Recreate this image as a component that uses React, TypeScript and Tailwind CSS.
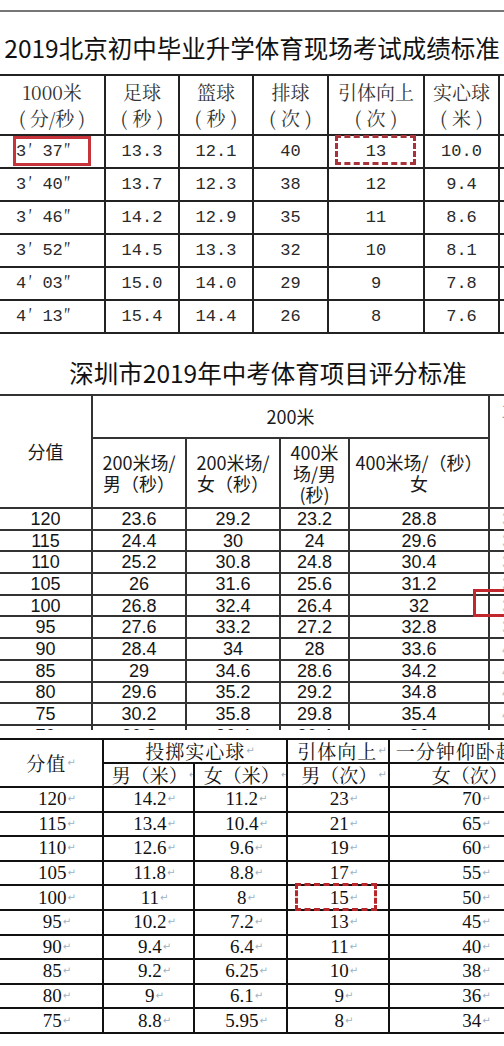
import React from "react";

const cjk = "font-['Noto_Serif_CJK_SC','Noto_Sans_CJK_SC',serif]";
const cjkSans = "font-['Noto_Sans_CJK_SC',sans-serif]";

const t1 = [
  [["3", "37"], "13.3", "12.1", "40", "13", "10.0"],
  [["3", "40"], "13.7", "12.3", "38", "12", "9.4"],
  [["3", "46"], "14.2", "12.9", "35", "11", "8.6"],
  [["3", "52"], "14.5", "13.3", "32", "10", "8.1"],
  [["4", "03"], "15.0", "14.0", "29", "9", "7.8"],
  [["4", "13"], "15.4", "14.4", "26", "8", "7.6"],
] as const;

const t2 = [
  ["120", "23.6", "29.2", "23.2", "28.8", "3"],
  ["115", "24.4", "30", "24", "29.6", "3"],
  ["110", "25.2", "30.8", "24.8", "30.4", "3"],
  ["105", "26", "31.6", "25.6", "31.2", "3"],
  ["100", "26.8", "32.4", "26.4", "32", "3"],
  ["95", "27.6", "33.2", "27.2", "32.8", "3"],
  ["90", "28.4", "34", "28", "33.6", "4"],
  ["85", "29", "34.6", "28.6", "34.2", "4"],
  ["80", "29.6", "35.2", "29.2", "34.8", "4"],
  ["75", "30.2", "35.8", "29.8", "35.4", "4"],
  ["70", "30.8", "36.4", "30.4", "36", "4"],
];

const t3 = [
  ["120", "14.2", "11.2", "23", "70"],
  ["115", "13.4", "10.4", "21", "65"],
  ["110", "12.6", "9.6", "19", "60"],
  ["105", "11.8", "8.8", "17", "55"],
  ["100", "11", "8", "15", "50"],
  ["95", "10.2", "7.2", "13", "45"],
  ["90", "9.4", "6.4", "11", "40"],
  ["85", "9.2", "6.25", "10", "38"],
  ["80", "9", "6.1", "9", "36"],
  ["75", "8.8", "5.95", "8", "34"],
];

function Ret() {
  return (
    <span className="font-['DejaVu_Sans',sans-serif] text-[10px] leading-[10px] text-[#9db3c3] ml-[1px]">
      ↵
    </span>
  );
}

function Paren({ c }: { c: string }) {
  return (
    <span>
      (<span className="mx-[5px]">{c}</span>)
    </span>
  );
}

function H1({ a, b }: { a: React.ReactNode; b: React.ReactNode }) {
  return (
    <div className={`bg-white flex flex-col items-center justify-center text-[19px] leading-[26px] text-[#333] ${cjk}`}>
      <div>{a}</div>
      <div>{b}</div>
    </div>
  );
}

function Time({ m, s }: { m: string; s: string }) {
  return (
    <span className="whitespace-nowrap">
      {m}
      <span className={`${cjk} text-[16px] ml-[2px] mr-[10px]`}>′</span>
      {s}
      <span className={`${cjk} text-[16px] ml-[1px]`}>″</span>
    </span>
  );
}

function Table1() {
  return (
    <div className="grid grid-cols-[104px_72px_72px_73px_94px_73px_100px] grid-rows-[58px_repeat(6,31px)] gap-[2px] bg-[#222] py-[2px] w-max">
      <H1 a="1000米" b={<span>(<span className="mx-[4px]">分/秒</span>)</span>} />
      <H1 a="足球" b={<Paren c="秒" />} />
      <H1 a="篮球" b={<Paren c="秒" />} />
      <H1 a="排球" b={<Paren c="次" />} />
      <H1 a="引体向上" b={<Paren c="次" />} />
      <H1 a="实心球" b={<Paren c="米" />} />
      <div className="bg-white" />
      {t1.map((r, i) => (
        <React.Fragment key={i}>
          {r.map((v, j) => (
            <div
              key={j}
              className={`bg-white flex items-center ${j === 0 ? "justify-start pl-[16px]" : "justify-center"} font-['Liberation_Mono','DejaVu_Sans_Mono',monospace] text-[17px] text-[#2a2a2a]`}
            >
              {typeof v === "string" ? v : <Time m={v[0]} s={v[1]} />}
            </div>
          ))}
          <div className="bg-white" />
        </React.Fragment>
      ))}
    </div>
  );
}

function Table2() {
  const hc = `bg-white flex flex-col items-center justify-center text-center text-[18px] leading-[21px] text-[#1a1a1a] ${cjkSans}`;
  return (
    <div className="grid grid-cols-[91px_92px_92px_67px_138px_40px] grid-rows-[41px_68px_repeat(11,19.7px)] gap-[2px] bg-[#333] pt-[2px] w-max">
      <div className={`${hc} row-span-2`}>分值</div>
      <div className={`${hc} col-span-4`}>200米</div>
      <div className={`bg-white row-span-2 pl-[11px] pt-[2px] whitespace-nowrap text-[18px] leading-[24px] text-[#999] ${cjkSans}`}>1</div>
      <div className={hc}>
        <div>200米场/</div>
        <div>男（秒）</div>
      </div>
      <div className={hc}>
        <div>200米场/</div>
        <div>女（秒）</div>
      </div>
      <div className={hc}>
        <div>400米</div>
        <div>场/男</div>
        <div>(秒)</div>
      </div>
      <div className={hc}>
        <div>400米场/（秒）</div>
        <div>女</div>
      </div>
      {t2.map((r, i) => (
        <React.Fragment key={i}>
          {r.map((v, j) => (
            <div
              key={j}
              className={`bg-white flex items-center ${j === 5 ? "justify-start pl-[12px] text-[#c4c4c4]" : "justify-center text-[#151515]"} font-['Liberation_Sans',sans-serif] text-[18px] leading-[20px]`}
            >
              {v}
            </div>
          ))}
        </React.Fragment>
      ))}
    </div>
  );
}

function Table3() {
  const hc = `bg-white flex items-center justify-center text-[19px] leading-[20px] text-[#111] ${cjk}`;
  return (
    <div className="grid grid-cols-[102px_89px_91px_100px_161px] grid-rows-[22px_22px_repeat(10,22.6px)] gap-[2px] bg-[#111] py-[2px] w-max">
      <div className={`${hc} row-span-2`}>
        <span className="tracking-[1px]">分值</span>
        <Ret />
      </div>
      <div className={`${hc} col-span-2 pl-[10px]`}>
        <span className="tracking-[1px]">投掷实心球</span>
        <Ret />
      </div>
      <div className={`${hc} pl-[8px]`}>
        <span className="tracking-[1px]">引体向上</span>
        <Ret />
      </div>
      <div className={`${hc} whitespace-nowrap`}>
        <span className="tracking-[1px]">一分钟仰卧起坐</span>
        <Ret />
      </div>
      <div className={`${hc} pl-[12px] whitespace-nowrap overflow-hidden`}>
        <span>男（米）</span>
        <Ret />
      </div>
      <div className={`${hc} pl-[12px] whitespace-nowrap overflow-hidden`}>
        <span>女（米）</span>
        <Ret />
      </div>
      <div className={`${hc} pl-[12px] whitespace-nowrap overflow-hidden`}>
        <span>男（次）</span>
        <Ret />
      </div>
      <div className={`${hc} pl-[8px] whitespace-nowrap`}>
        <span>女（次）</span>
        <Ret />
      </div>
      {t3.map((r, i) => (
        <React.Fragment key={i}>
          {r.map((v, j) => (
            <div
              key={j}
              className="bg-white flex items-center justify-center pl-[12px] font-['Liberation_Serif',serif] text-[19px] leading-[22px] text-[#111]"
            >
              <span>{v}</span>
              <Ret />
            </div>
          ))}
        </React.Fragment>
      ))}
    </div>
  );
}

export default function App() {
  return (
    <div className="relative w-[504px] h-[1046px] overflow-hidden bg-white">
      {/* Section 1 */}
      <div className="pt-[10px]">
        <div className="h-[2px] w-full bg-[#777777]" />
        <div
          className={`mt-[21px] mb-[11px] h-[30px] leading-[30px] text-center whitespace-nowrap text-[24.5px] text-[#111] ${cjkSans}`}
        >
          2019北京初中毕业升学体育现场考试成绩标准
        </div>
        <Table1 />
      </div>

      {/* Section 2 */}
      <div>
        <div
          className={`h-[60px] flex items-end justify-center pl-[32px] pb-[6px] whitespace-nowrap text-[24.5px] leading-[30px] text-[#111] ${cjkSans}`}
        >
          深圳市2019年中考体育项目评分标准
        </div>
        <div className="h-[336px] overflow-hidden">
          <Table2 />
        </div>
      </div>

      {/* Section 3 */}
      <div className="mt-[8px]">
        <Table3 />
      </div>

      {/* annotation boxes */}
      <div className="absolute left-[13px] top-[136px] w-[78px] h-[30px] border-[3px] border-[#c7333a]" />
      <div className="absolute left-[335px] top-[135px] w-[81px] h-[30px] border-[3px] border-dashed border-[#a8323a]" />
      <div className="absolute left-[473px] top-[589px] w-[40px] h-[28px] border-[3px] border-[#c0282d]" />
      <div className="absolute left-[295px] top-[883px] w-[82px] h-[28px] border-[3px] border-dashed border-[#b8262b]" />
    </div>
  );
}
